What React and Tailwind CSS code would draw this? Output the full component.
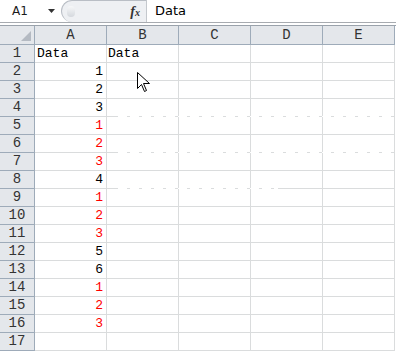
import React from "react";

const COLS = ["A", "B", "C", "D", "E"];

const VALUES = [
  { v: 1, red: false },
  { v: 2, red: false },
  { v: 3, red: false },
  { v: 1, red: true },
  { v: 2, red: true },
  { v: 3, red: true },
  { v: 4, red: false },
  { v: 1, red: true },
  { v: 2, red: true },
  { v: 3, red: true },
  { v: 5, red: false },
  { v: 6, red: false },
  { v: 1, red: true },
  { v: 2, red: true },
  { v: 3, red: true },
];

const mono = "font-['Liberation_Mono','DejaVu_Sans_Mono',monospace]";

function Cell({ children, className = "" }) {
  return (
    <div
      className={`h-[18px] w-[72px] shrink-0 border-r border-b border-[#dadcdd] text-[13px] leading-[17px] ${className}`}
    >
      {children}
    </div>
  );
}

function Row({ n }) {
  const val = n >= 2 && n <= 16 ? VALUES[n - 2] : null;
  return (
    <div className="flex">
      <div
        className={`h-[18px] w-[35px] shrink-0 border-r border-b border-[#9eabb9] bg-[#e4e7eb] text-center text-[14px] leading-[17px] text-[#333] ${mono}`}
      >
        {n}
      </div>
      <Cell className={`${mono} ${n === 1 ? "pl-[2px]" : "pr-[3px] text-right"}`}>
        {n === 1 ? "Data" : val ? <span className={val.red ? "text-[#ff0000]" : "text-black"}>{val.v}</span> : null}
      </Cell>
      <Cell className={`${mono} pl-[1px]`}>{n === 1 ? "Data" : null}</Cell>
      <Cell />
      <Cell />
      <Cell />
    </div>
  );
}

export default function App() {
  const rows = Array.from({ length: 17 }, (_, i) => i + 1);
  return (
    <div className="relative h-[351px] w-[396px] overflow-hidden bg-white">
      {/* formula bar */}
      <div className="flex h-[23px] border-b border-[#a7abb0] font-['DejaVu_Sans','Liberation_Sans',sans-serif] text-[12px]">
        <div className="flex w-[61px] items-center pl-[12px]">
          <span className="text-[#1a1a1a]">A1</span>
          <svg className="ml-[20px]" width="7" height="4" viewBox="0 0 7 4">
            <path d="M0 0h7L3.5 4z" fill="#333" />
          </svg>
        </div>
        <div className="relative flex w-[85px] items-center justify-end rounded-l-[11px] border-t border-l border-[#b9bec5] bg-[#eef0f3] pr-[6px]">
          <div className="absolute left-[5px] top-[5px] h-[11px] w-[8px] rounded-full bg-gradient-to-b from-[#f7f8f9] to-[#d4d8dd]" />
          <span className="font-['Liberation_Serif',serif] text-[14px] font-bold italic text-[#333]">
            f<span className="text-[10px]">x</span>
          </span>
        </div>
        <div className="flex flex-1 items-center border-l border-[#c4c8cd] pl-[8px] text-[13px] text-black">
          Data
        </div>
      </div>
      <div className="h-[2px]" />
      {/* column header */}
      <div className={`flex border-t border-[#9aa2ab] ${mono} text-[14px] text-[#333]`}>
        <div className="relative h-[19px] w-[35px] shrink-0 border-r border-b border-[#9eabb9] bg-[#e4e7eb]">
          <svg className="absolute bottom-[3px] right-[3px]" width="10" height="10" viewBox="0 0 10 10">
            <path d="M10 0V10H0z" fill="#b4bac2" />
          </svg>
        </div>
        {COLS.map((c) => (
          <div
            key={c}
            className="h-[19px] w-[72px] shrink-0 border-r border-b border-[#9eabb9] bg-[#e4e7eb] text-center leading-[18px]"
          >
            {c}
          </div>
        ))}
      </div>
      {rows.map((n) => (
        <Row key={n} n={n} />
      ))}
      {/* capture artefact: broken gridlines */}
      <div className="absolute left-[118px] top-[116px] h-[1px] w-[276px] bg-[repeating-linear-gradient(90deg,#fff_0_9px,transparent_9px_12px)]" />
      <div className="absolute left-[118px] top-[152px] h-[1px] w-[276px] bg-[repeating-linear-gradient(90deg,#fff_0_9px,transparent_9px_12px)]" />
      <div className="absolute left-[118px] top-[188px] h-[1px] w-[160px] bg-[repeating-linear-gradient(90deg,#fff_0_9px,transparent_9px_12px)]" />
      {/* mouse pointer */}
      <svg className="absolute left-[137px] top-[72px]" width="13" height="21" viewBox="0 0 13 21">
        <path
          d="M0.5 0.5V16.5L4.5 12.5L7.5 19.5L9.5 18.5L6.5 11.5H12.5Z"
          fill="#fff"
          stroke="#000"
          strokeWidth="1"
          strokeLinejoin="miter"
        />
      </svg>
    </div>
  );
}
